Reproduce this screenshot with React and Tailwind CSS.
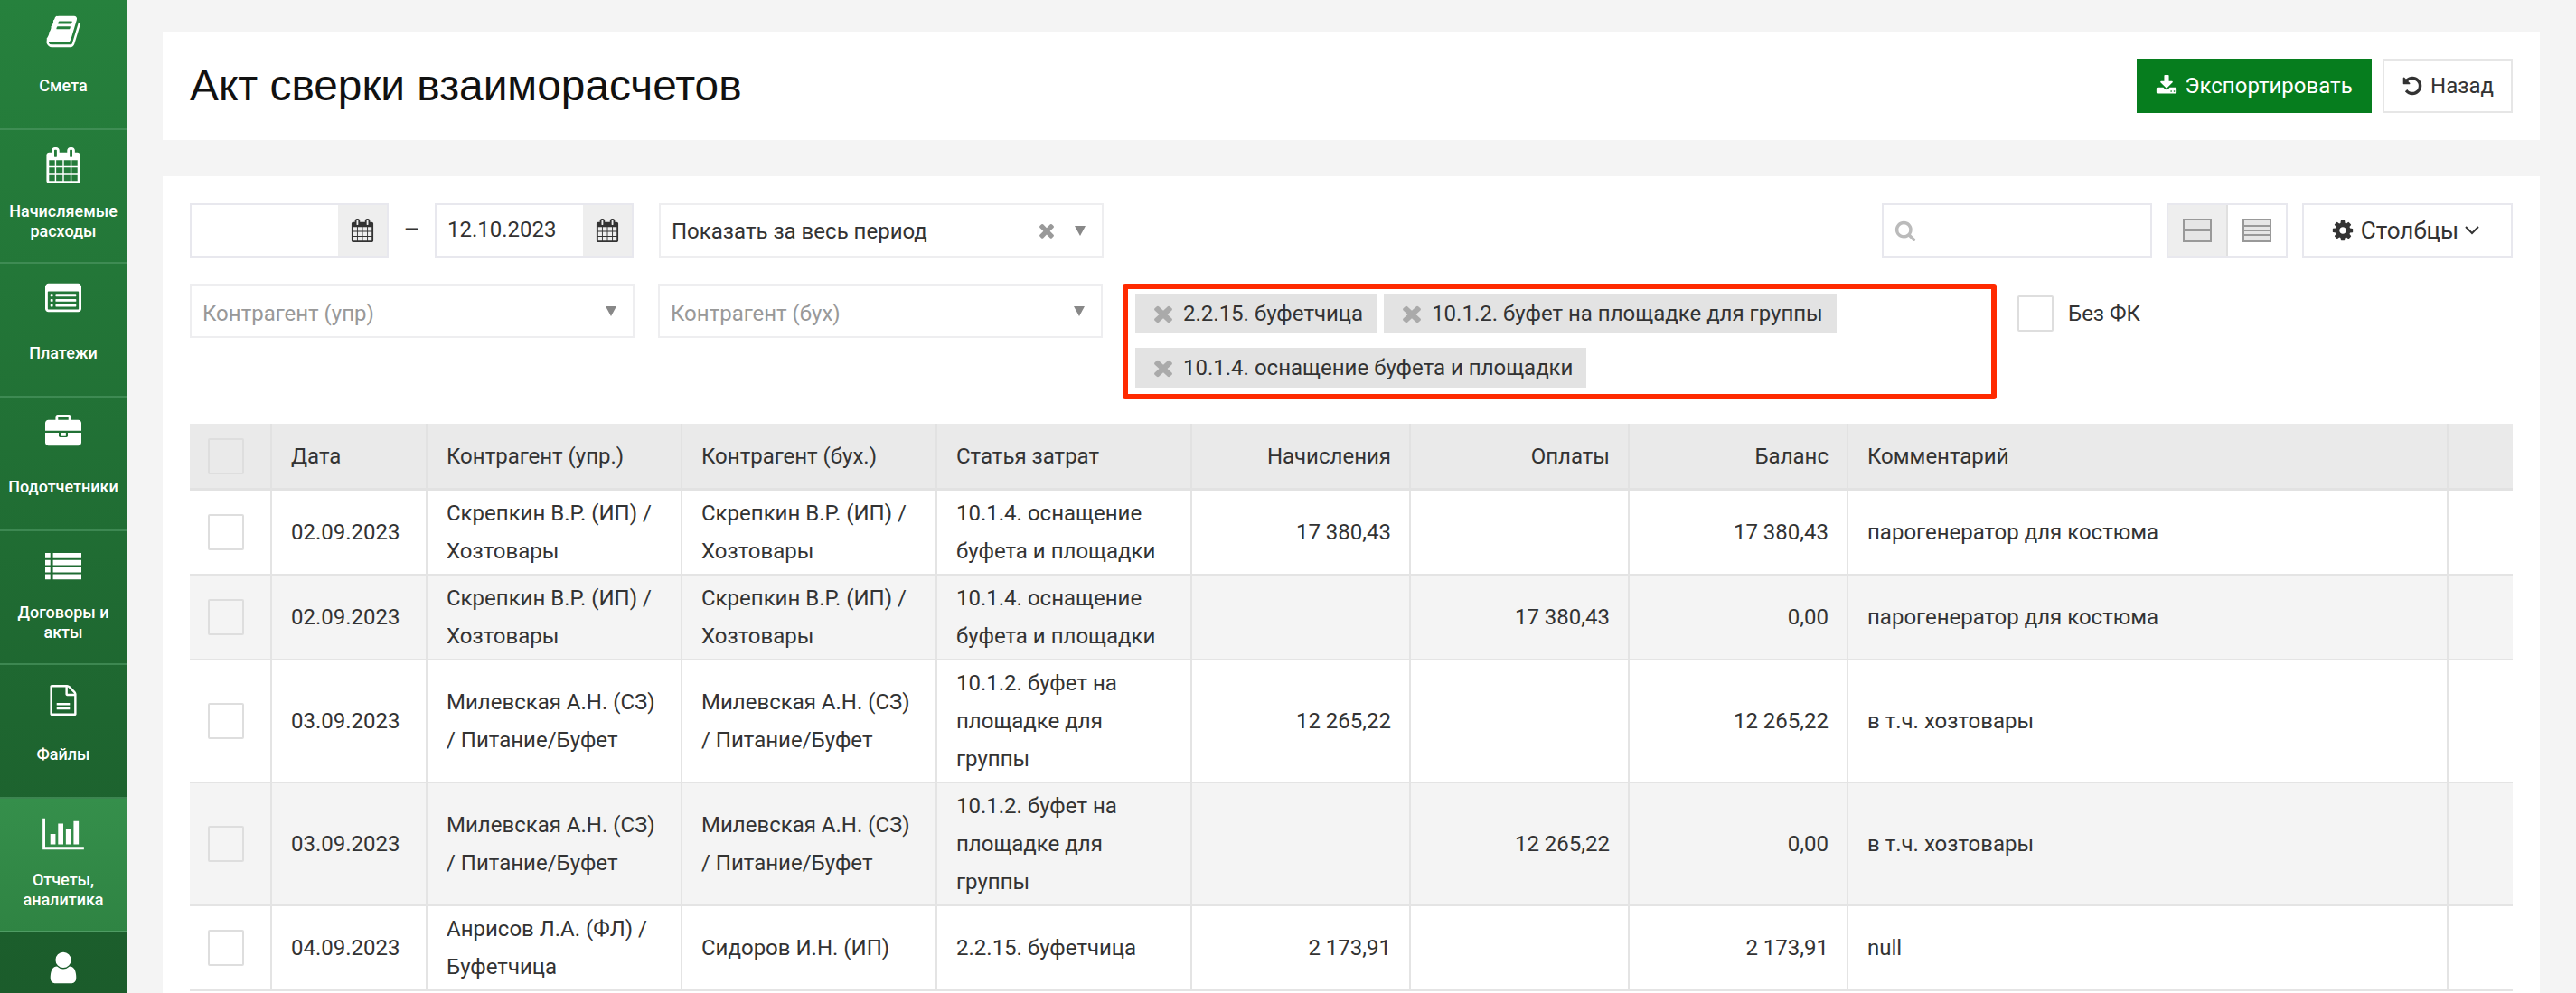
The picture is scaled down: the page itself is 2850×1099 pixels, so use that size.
import React from "react";

const P = {
  book: "M1703 478q40 57 18 129l-275 906q-19 64-76.500 107.500t-122.500 43.500h-923q-77 0-148.500-53.500t-99.500-131.500q-24-67-2-127 0-4 3-27t4-37q1-8-3-21.500t-3-19.500q2-11 8-21t16.500-23.500 16.500-23.500q23-38 45-91.500t30-91.500q3-10 .5-30t-.5-28q3-11 17-28t17-23q21-36 42-92t25-90q1-9-2.500-32t.5-28q4-13 22-30.500t22-22.500q19-26 42.500-84.500t27.500-96.500q1-8-3-25.500t-2-26.500q2-8 9-18t18-23 17-21q8-12 16.500-30.500t15-35 16-36 19.500-32 26.500-23.500 36-11.500 47.500 5.500l-1 3q38-9 51-9h761q74 0 114 56t18 130l-274 906q-36 119-71.500 153.500t-128.500 34.500h-869q-27 0-38 15-11 16-1 43 24 70 144 70h923q29 0 56-15.500t35-41.500l300-987q7-22 5-57 38 15 59 43zm-1064 2q-4 13 2 22.500t20 9.500h608q13 0 25.500-9.500t16.500-22.500l21-64q4-13-2-22.500t-20-9.500h-608q-13 0-25.500 9.500t-16.500 22.500zm-83 256q-4 13 2 22.500t20 9.500h608q13 0 25.500-9.500t16.500-22.500l21-64q4-13-2-22.500t-20-9.500h-608q-13 0-25.500 9.500t-16.500 22.500z",
  calendar: "M192 1664h288v-288h-288v288zm352 0h320v-288h-320v288zm-352-352h288v-320h-288v320zm352 0h320v-320h-320v320zm-352-384h288v-288h-288v288zm736 736h320v-288h-320v288zm-384-736h320v-288h-320v288zm768 736h288v-288h-288v288zm-384-352h320v-320h-320v320zm-352-864v-288q0-13-9.500-22.500t-22.500-9.500h-64q-13 0-22.500 9.500t-9.500 22.500v288q0 13 9.500 22.500t22.500 9.500h64q13 0 22.500-9.500t9.500-22.500zm736 864h288v-320h-288v320zm-384-384h320v-288h-320v288zm384 0h288v-288h-288v288zm32-480v-288q0-13-9.500-22.500t-22.500-9.500h-64q-13 0-22.500 9.500t-9.500 22.500v288q0 13 9.500 22.500t22.500 9.500h64q13 0 22.500-9.500t9.500-22.500zm384-64v1280q0 52-38 90t-90 38h-1408q-52 0-90-38t-38-90v-1280q0-52 38-90t90-38h128v-96q0-66 47-113t113-47h64q66 0 113 47t47 113v96h384v-96q0-66 47-113t113-47h64q66 0 113 47t47 113v96h128q52 0 90 38t38 90z",
  listAlt: "M384 1184v64q0 13-9.500 22.500t-22.500 9.500h-64q-13 0-22.500-9.500t-9.500-22.500v-64q0-13 9.500-22.500t22.500-9.500h64q13 0 22.500 9.500t9.500 22.500zm0-256v64q0 13-9.500 22.500t-22.500 9.500h-64q-13 0-22.500-9.500t-9.500-22.500v-64q0-13 9.500-22.500t22.500-9.500h64q13 0 22.500 9.500t9.500 22.500zm0-256v64q0 13-9.500 22.500t-22.500 9.500h-64q-13 0-22.500-9.500t-9.500-22.500v-64q0-13 9.500-22.500t22.500-9.500h64q13 0 22.500 9.500t9.500 22.500zm1152 512v64q0 13-9.500 22.500t-22.500 9.500h-960q-13 0-22.500-9.500t-9.500-22.500v-64q0-13 9.500-22.500t22.500-9.500h960q13 0 22.500 9.500t9.500 22.500zm0-256v64q0 13-9.500 22.500t-22.500 9.500h-960q-13 0-22.500-9.500t-9.500-22.500v-64q0-13 9.500-22.500t22.500-9.500h960q13 0 22.500 9.500t9.500 22.500zm0-256v64q0 13-9.500 22.500t-22.500 9.500h-960q-13 0-22.500-9.500t-9.500-22.500v-64q0-13 9.500-22.500t22.500-9.500h960q13 0 22.500 9.500t9.500 22.500zm128 704v-832q0-13-9.500-22.500t-22.500-9.500h-1472q-13 0-22.500 9.500t-9.500 22.500v832q0 13 9.500 22.500t22.500 9.500h1472q13 0 22.500-9.500t9.500-22.500zm128-1088v1088q0 66-47 113t-113 47h-1472q-66 0-113-47t-47-113v-1088q0-66 47-113t113-47h1472q66 0 113 47t47 113z",
  briefcase: "M640 256h512v-128h-512v128zm1152 640v480q0 66-47 113t-113 47h-1472q-66 0-113-47t-47-113v-480h672v160q0 26 19 45t45 19h320q26 0 45-19t19-45v-160h672zm-768 0v128h-256v-128h256zm768-480v384h-1792v-384q0-66 47-113t113-47h352v-160q0-40 28-68t68-28h576q40 0 68 28t28 68v160h352q66 0 113 47t47 113z",
  list: "M0 224h256v256h-256zM384 224h1408v256h-1408zM0 576h256v256h-256zM384 576h1408v256h-1408zM0 928h256v256h-256zM384 928h1408v256h-1408zM0 1280h256v256h-256zM384 1280h1408v256h-1408z",
  file: "M1596 380q28 28 48 76t20 88v1152q0 40-28 68t-68 28h-1344q-40 0-68-28t-28-68v-1600q0-40 28-68t68-28h896q40 0 88 20t76 48zm-444-244v376h376q-10-29-22-41l-313-313q-12-12-41-22zm384 1528v-1024h-416q-40 0-68-28t-28-68v-416h-768v1536h1280zm-1024-608h768v128h-768zm0 256h768v128h-768z",
  user: "M1536 1399q0 109-62.500 187t-150.500 78h-854q-88 0-150.500-78t-62.500-187q0-85 8.500-160.500t31.500-152 58.500-131 94-89 134.500-34.500q131 128 313 128t313-128q76 0 134.500 34.500t94 89 58.500 131 31.500 152 8.500 160.500zm-256-887q0 159-112.500 271.500t-271.500 112.500-271.500-112.500-112.500-271.500 112.500-271.500 271.500-112.500 271.500 112.500 112.500 271.500z",
  undo: "M1664 896q0 156-61 298t-164 245-245 164-298 61q-172 0-327-72.500t-264-204.500q-7-10-6.500-22.500t8.500-20.500l137-138q10-9 25-9 16 2 23 12 73 95 179 147t225 52q104 0 198.500-40.500t163.500-109.500 109.500-163.500 40.500-198.500-40.500-198.500-109.500-163.500-163.500-109.500-198.500-40.500q-98 0-188 35.500t-160 101.500l137 138q31 30 14 69-17 40-59 40h-448q-26 0-45-19t-19-45v-448q0-42 40-59 39-17 69 14l130 129q107-101 244.500-156.500t284.500-55.500q156 0 298 61t245 164 164 245 61 298z",
  download: "M1344 1344q0-26-19-45t-45-19-45 19-19 45 19 45 45 19 45-19 19-45zm256 0q0-26-19-45t-45-19-45 19-19 45 19 45 45 19 45-19 19-45zm128-224v320q0 40-28 68t-68 28h-1472q-40 0-68-28t-28-68v-320q0-40 28-68t68-28h465l135 136q58 56 136 56t136-56l136-136h464q40 0 68 28t28 68zm-325-569q17 41-14 70l-448 448q-18 19-45 19t-45-19l-448-448q-31-29-14-70 17-39 59-39h256v-448q0-26 19-45t45-19h256q26 0 45 19t19 45v448h256q42 0 59 39z",
  cog: "M1152 896q0-106-75-181t-181-75-181 75-75 181 75 181 181 75 181-75 75-181zm512-109v222q0 12-8 23t-20 13l-185 28q-19 54-39 91 35 50 107 138 10 12 10 25t-9 23q-27 37-99 108t-94 71q-12 0-26-9l-138-108q-44 23-91 38-16 136-29 186-7 28-36 28h-222q-14 0-24.500-8.500t-11.500-21.500l-28-184q-49-16-90-37l-141 107q-10 9-25 9-14 0-25-11-126-114-165-168-7-10-7-23 0-12 8-23 15-21 51-66.500t54-70.500q-27-50-41-99l-183-27q-13-2-21-12.500t-8-23.500v-222q0-12 8-23t19-13l186-28q14-46 39-92-40-57-107-138-10-12-10-24 0-10 9-23 26-36 98.500-107.500t94.500-71.500q13 0 26 10l138 107q44-23 91-38 16-136 29-186 7-28 36-28h222q14 0 24.500 8.500t11.500 21.500l28 184q49 16 90 37l142-107q9-9 24-9 13 0 25 10 129 119 165 170 7 8 7 22 0 12-8 23-15 21-51 66.500t-54 70.500q26 50 41 98l183 28q13 2 21 12.500t8 23.500z",
  search: "M1216 832q0-185-131.500-316.500t-316.500-131.500-316.500 131.500-131.500 316.500 131.500 316.500 316.500 131.500 316.500-131.500 131.500-316.500zm512 832q0 52-38 90t-90 38q-54 0-90-38l-343-342q-179 124-399 124-143 0-273.500-55.500t-225-150-150-225-55.500-273.500 55.500-273.500 150-225 225-150 273.500-55.500 273.500 55.500 225 150 150 225 55.500 273.500q0 220-124 399l343 343q37 37 37 90z",
  times: "M1490 1322q0 40-28 68l-136 136q-28 28-68 28t-68-28l-294-294-294 294q-28 28-68 28t-68-28l-136-136q-28-28-28-68t28-68l294-294-294-294q-28-28-28-68t28-68l136-136q28-28 68-28t68 28l294 294 294-294q28-28 68-28t68 28l136 136q28 28 28 68t-28 68l-294 294 294 294q28 28 28 68z",
};
const BAR = "M640 896v512h-256v-512h256zm384-512v1024h-256v-1024h256zm1024 1152v128h-2048v-1536h128v1408h1920zm-640-896v768h-256v-768h256zm384-384v1152h-256v-1152h256z";

const Fa = ({ d, className, vb = "0 0 1792 1792", par }) => (
  <svg viewBox={vb} className={className} fill="currentColor" aria-hidden="true" preserveAspectRatio={par}><path d={d} /></svg>
);

const NAV = [
  { d: P.book, label: "Смета", icon: "h-[40px] w-[40px]" },
  { d: P.calendar, label: "Начисляемые расходы", two: true, icon: "h-[40px] w-[40px]" },
  { d: P.listAlt, label: "Платежи", icon: "h-[40px] w-[40px]" },
  { d: P.briefcase, label: "Подотчетники", icon: "h-[40px] w-[40px]" },
  { d: P.list, label: "Договоры и акты", two: true, icon: "h-[40px] w-[40px]" },
  { d: P.file, label: "Файлы", icon: "h-[34px] w-[34px]" },
  { d: BAR, label: "Отчеты, аналитика", two: true, active: true, vb: "0 0 2048 1792", icon: "h-[40px] w-[46px]" },
  { d: P.user, label: "", icon: "h-[40px] w-[40px]" },
];

const Sidebar = () => (
  <aside className="w-[140px] shrink-0 h-[1099px] overflow-hidden bg-gradient-to-b from-[#26813d] to-[#1b5c2b] text-white">
    <div className="-mt-[4px]">
      {NAV.map((n, i) => (
        <div
          key={i}
          className={
            n.active
              ? "h-[148px] border-b-2 border-[#4f9c64] bg-gradient-to-b from-[#358f4b] to-[#2f8443] flex flex-col items-center"
              : "h-[148px] border-b-2 border-[#4a9460]/70 flex flex-col items-center"
          }
        >
          <div className="mt-[19px] h-[40px] flex items-center justify-center">
            <Fa d={n.d} vb={n.vb} className={n.icon} />
          </div>
          <div
            className={
              (n.two ? "mt-[20px]" : "mt-[18px]") +
              " h-[44px] flex items-center justify-center text-center text-[18px] leading-[22px] font-medium px-2"
            }
          >
            {n.label}
          </div>
        </div>
      ))}
    </div>
  </aside>
);

const DateInput = ({ value }) => (
  <div className="w-[220px] h-[60px] border-2 border-[#e8e8ee] flex">
    <div className="flex-1 pl-[12px] leading-[54px] text-[#333]">{value}</div>
    <div className="w-[54px] bg-[#eeeeee] flex items-center justify-center text-[#333]">
      <Fa d={P.calendar} className="w-[26px] h-[26px]" />
    </div>
  </div>
);

const Arrow = ({ className }) => (
  <svg viewBox="0 0 12 11" className={className} fill="#888"><path d="M0 0h12L6 11z" /></svg>
);

const Select = ({ text, placeholder, clear, className = "" }) => (
  <div className={"w-[492px] h-[60px] border-2 border-[#eeeef0] flex items-center pl-[12px] pr-[18px] " + className}>
    <span className={placeholder ? "flex-1 pt-[5px] text-[#999]" : "flex-1 pt-[2px] text-[#333]"}>{text}</span>
    {clear && <Fa d={P.times} className="w-[24px] h-[24px] text-[#999] mr-[19px]" />}
    <Arrow className="w-[12px] h-[11px]" />
  </div>
);

const Chip = ({ children }) => (
  <div className="h-[44px] bg-[#e3e3e3] flex items-center pl-[16px] pr-[15px] text-[#333]">
    <Fa d={P.times} className="w-[30px] h-[28px] text-[#aaa] mr-[7px]" par="none" />
    {children}
  </div>
);

const Check = ({ className = "" }) => (
  <div className={"w-[40px] h-[40px] border-2 border-[#dedede] rounded-[2px] " + className} />
);

const COLS = [91, 172, 282, 282, 282, 242, 242, 242, 664, 71];
const HEAD = ["", "Дата", "Контрагент (упр.)", "Контрагент (бух.)", "Статья затрат", "Начисления", "Оплаты", "Баланс", "Комментарий", ""];
const RIGHT = [5, 6, 7];
const ROWS = [
  ["02.09.2023", "Скрепкин В.Р. (ИП) / Хозтовары", "Скрепкин В.Р. (ИП) / Хозтовары", "10.1.4. оснащение буфета и площадки", "17 380,43", "", "17 380,43", "парогенератор для костюма"],
  ["02.09.2023", "Скрепкин В.Р. (ИП) / Хозтовары", "Скрепкин В.Р. (ИП) / Хозтовары", "10.1.4. оснащение буфета и площадки", "", "17 380,43", "0,00", "парогенератор для костюма"],
  ["03.09.2023", "Милевская А.Н. (СЗ) / Питание/Буфет", "Милевская А.Н. (СЗ) / Питание/Буфет", "10.1.2. буфет на площадке для группы", "12 265,22", "", "12 265,22", "в т.ч. хозтовары"],
  ["03.09.2023", "Милевская А.Н. (СЗ) / Питание/Буфет", "Милевская А.Н. (СЗ) / Питание/Буфет", "10.1.2. буфет на площадке для группы", "", "12 265,22", "0,00", "в т.ч. хозтовары"],
  ["04.09.2023", "Анрисов Л.А. (ФЛ) / Буфетчица", "Сидоров И.Н. (ИП)", "2.2.15. буфетчица", "2 173,91", "", "2 173,91", "null"],
];

const Table = () => (
  <table className="mt-[27px] w-[2570px] table-fixed border-separate border-spacing-0 text-[#333] leading-[42px]">
    <colgroup>
      {COLS.map((w, i) => (
        <col key={i} style={{ width: w }} />
      ))}
    </colgroup>
    <thead>
      <tr className="bg-[#eaeaea]">
        {HEAD.map((h, i) => (
          <th
            key={i}
            className={
              (RIGHT.includes(i) ? "text-right " : "text-left ") +
              "h-[74px] pl-[21px] pr-[20px] font-normal align-middle border-b-[3px] border-b-[#e2e2e2] " +
              (i < 9 ? "border-r-2 border-r-[#e2e2e2]" : "")
            }
          >
            {i === 0 ? <Check className="-ml-[1px]" /> : h}
          </th>
        ))}
      </tr>
    </thead>
    <tbody>
      {ROWS.map((r, ri) => (
        <tr key={ri} className={ri % 2 ? "bg-[#f4f4f4]" : "bg-white"}>
          <td className="px-[20px] py-[4px] align-middle border-b-2 border-b-[#e4e4e4] border-r-2 border-r-[#e4e4e4]">
            <Check />
          </td>
          {r.map((c, ci) => (
            <td
              key={ci}
              className={
                (RIGHT.includes(ci + 1) ? "text-right " : "text-left ") +
                "pl-[21px] pr-[20px] py-[4px] align-middle border-b-2 border-b-[#e4e4e4] border-r-2 border-r-[#e4e4e4]"
              }
            >
              {c}
            </td>
          ))}
          <td className="border-b-2 border-b-[#e4e4e4]" />
        </tr>
      ))}
    </tbody>
  </table>
);

export default function App() {
  return (
    <div className="w-[2850px] h-[1099px] overflow-hidden flex bg-[#f4f4f4] text-[24px] [font-family:Roboto,sans-serif]">
      <Sidebar />
      <main className="flex-1 min-w-0 pt-[35px] pl-[40px] pr-[40px]">
        <header className="h-[120px] bg-white px-[30px] flex items-center justify-between">
          <h1 className="text-[47.8px] font-normal text-[#111] [font-family:'Liberation_Sans',sans-serif]">
            Акт сверки взаиморасчетов
          </h1>
          <div className="flex gap-[12px]">
            <button className="h-[60px] w-[260px] bg-[#067d1e] text-white flex items-center justify-center gap-[8px]">
              <Fa d={P.download} className="w-[24px] h-[24px]" />
              Экспортировать
            </button>
            <button className="h-[60px] w-[144px] border-2 border-[#e6e6e6] text-[#333] flex items-center justify-center gap-[8px]">
              <Fa d={P.undo} className="w-[24px] h-[24px]" />
              Назад
            </button>
          </div>
        </header>
        <section className="mt-[40px] bg-white h-[904px] px-[30px] pt-[30px]">
          <div className="flex items-center">
            <DateInput value="" />
            <span className="w-[51px] text-center text-[21px] text-[#333]">—</span>
            <DateInput value="12.10.2023" />
            <Select text="Показать за весь период" clear className="ml-[28px]" />
            <div className="flex-1" />
            <div className="w-[299px] h-[60px] border-2 border-[#e8e8ee] flex items-center pl-[12px] text-[#bbb]">
              <Fa d={P.search} className="w-[24px] h-[24px]" />
            </div>
            <div className="ml-[16px] w-[134px] h-[60px] border-2 border-[#e8e8ee] flex">
              <div className="w-[66px] bg-[#eeeeee] border-r-2 border-[#e0e0e0] flex items-center justify-center">
                <svg viewBox="0 0 32 26" className="w-[32px] h-[26px]">
                  <rect x="1" y="1" width="30" height="24" fill="#e6e6e6" stroke="#999" strokeWidth="2" />
                  <rect x="1" y="11" width="30" height="3" fill="#999" />
                </svg>
              </div>
              <div className="flex-1 flex items-center justify-center">
                <svg viewBox="0 0 32 26" className="w-[32px] h-[26px]">
                  <rect x="1" y="1" width="30" height="24" fill="#e6e6e6" stroke="#999" strokeWidth="2" />
                  <rect x="1" y="7" width="30" height="2" fill="#999" />
                  <rect x="1" y="12" width="30" height="2" fill="#999" />
                  <rect x="1" y="17" width="30" height="2" fill="#999" />
                </svg>
              </div>
            </div>
            <button className="ml-[16px] w-[233px] h-[60px] border-2 border-[#e8e8ee] pr-[5px] text-[26px] text-[#333] flex items-center justify-center gap-[7px]">
              <Fa d={P.cog} className="w-[26px] h-[26px]" />
              Столбцы
              <svg viewBox="0 0 16 10" className="w-[16px] h-[10px]" fill="none" stroke="#333" strokeWidth="2">
                <path d="M1 1l7 7 7-7" />
              </svg>
            </button>
          </div>
          <div className="mt-[29px] flex items-start">
            <Select text="Контрагент (упр)" placeholder />
            <Select text="Контрагент (бух)" placeholder className="ml-[26px]" />
            <div className="ml-[22px] w-[967px] h-[128px] border-[6px] border-[#ff2a00] rounded-[3px] pl-[8px] pt-[5px] flex flex-wrap content-start gap-x-[8px] gap-y-[16px]">
              <Chip>2.2.15. буфетчица</Chip>
              <Chip>10.1.2. буфет на площадке для группы</Chip>
              <Chip>10.1.4. оснащение буфета и площадки</Chip>
            </div>
            <div className="ml-[23px] mt-[13px] flex items-center gap-[16px] text-[#333]">
              <Check />
              Без ФК
            </div>
          </div>
          <Table />
        </section>
      </main>
    </div>
  );
}
